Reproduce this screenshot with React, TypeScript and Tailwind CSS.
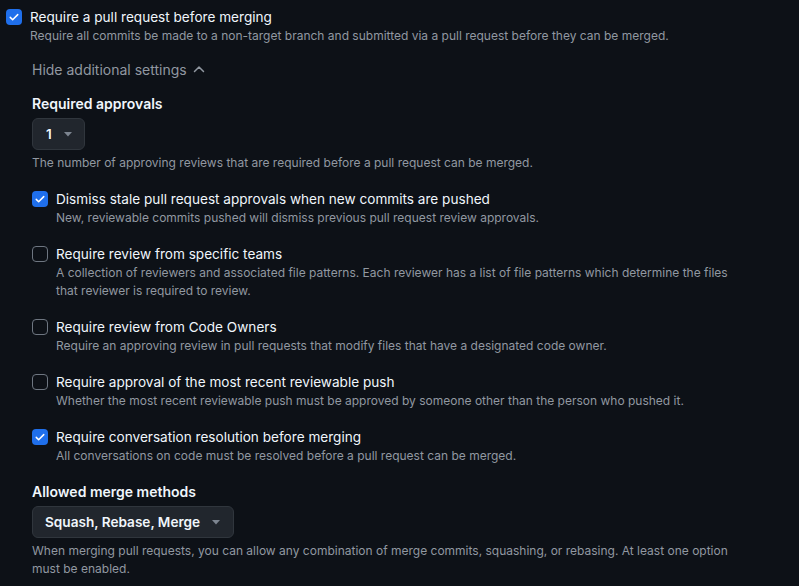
import React from 'react';

// Branch protection settings, dark theme

const Check: React.FC<{ checked?: boolean }> = ({ checked }) =>
  checked ? (
    <span className="flex h-4 w-4 shrink-0 items-center justify-center rounded-[4px] bg-[#1f6feb]">
      <svg width="12" height="12" viewBox="0 0 16 16" fill="none">
        <path d="M3 8.5l3.2 3.2L13 4.8" stroke="#ffffff" strokeWidth="2" strokeLinecap="round" strokeLinejoin="round" />
      </svg>
    </span>
  ) : (
    <span className="block h-4 w-4 shrink-0 rounded-[4px] border border-[#6e7681] bg-[#0d1117]" />
  );

const Caret = () => (
  <svg width="8" height="5" viewBox="0 0 8 5" className="ml-[12px]">
    <path d="M0 0h8L4 4.5z" fill="#7d8590" />
  </svg>
);

const Option: React.FC<{ checked?: boolean; title: string; desc: string }> = ({ checked, title, desc }) => (
  <div className="flex gap-2">
    <div className="pt-[2px]">
      <Check checked={checked} />
    </div>
    <div>
      <div className="text-[13.6px] leading-[20px] text-[#f0f6fc]">{title}</div>
      <div className="max-w-[680px] text-[12px] leading-[18px] text-[#9198a1]">{desc}</div>
    </div>
  </div>
);

export default function App() {
  return (
    <div
      className="min-h-[586px] w-full bg-[#0d1117] pl-[6px] pt-[7px]"
      style={{ fontFamily: 'Inter, "Noto Sans", sans-serif' }}
    >
      <Option
        checked
        title="Require a pull request before merging"
        desc="Require all commits be made to a non-target branch and submitted via a pull request before they can be merged."
      />

      <div className="ml-[26px] mt-[14px]">
        <div className="flex h-[20px] items-center text-[14px] text-[#9198a1]">
          Hide additional settings
          <svg width="12" height="8" viewBox="0 0 12 8" className="ml-[6px]" fill="none">
            <path d="M1.5 6.5L6 2l4.5 4.5" stroke="#9198a1" strokeWidth="1.5" strokeLinecap="round" strokeLinejoin="round" />
          </svg>
        </div>

        <div className="mt-[15px] text-[14px] font-semibold leading-[20px] text-[#f0f6fc]">Required approvals</div>
        <button className="mt-[4px] flex h-[32px] w-[53px] items-center rounded-[6px] border border-[#30363d] bg-[#21262d] pl-[13px] text-[13.6px] font-semibold text-[#f0f6fc]">
          1
          <Caret />
        </button>
        <div className="mt-[4px] text-[12px] leading-[18px] text-[#9198a1]">
          The number of approving reviews that are required before a pull request can be merged.
        </div>

        <div className="mt-[17px] flex flex-col gap-[17px]">
          <Option
            checked
            title="Dismiss stale pull request approvals when new commits are pushed"
            desc="New, reviewable commits pushed will dismiss previous pull request review approvals."
          />
          <Option
            title="Require review from specific teams"
            desc="A collection of reviewers and associated file patterns. Each reviewer has a list of file patterns which determine the files that reviewer is required to review."
          />
          <Option
            title="Require review from Code Owners"
            desc="Require an approving review in pull requests that modify files that have a designated code owner."
          />
          <Option
            title="Require approval of the most recent reviewable push"
            desc="Whether the most recent reviewable push must be approved by someone other than the person who pushed it."
          />
          <Option
            checked
            title="Require conversation resolution before merging"
            desc="All conversations on code must be resolved before a pull request can be merged."
          />
        </div>

        <div className="mt-[17px] text-[14px] font-semibold leading-[20px] text-[#f0f6fc]">Allowed merge methods</div>
        <button className="mt-[4px] flex h-[32px] w-[202px] items-center rounded-[6px] border border-[#30363d] bg-[#21262d] pl-[12px] text-[13.6px] font-semibold text-[#f0f6fc]">
          Squash, Rebase, Merge
          <Caret />
        </button>
        <div className="mt-[4px] max-w-[700px] text-[12px] leading-[18px] text-[#9198a1]">
          When merging pull requests, you can allow any combination of merge commits, squashing, or rebasing. At least one
          option must be enabled.
        </div>
      </div>
    </div>
  );
}
